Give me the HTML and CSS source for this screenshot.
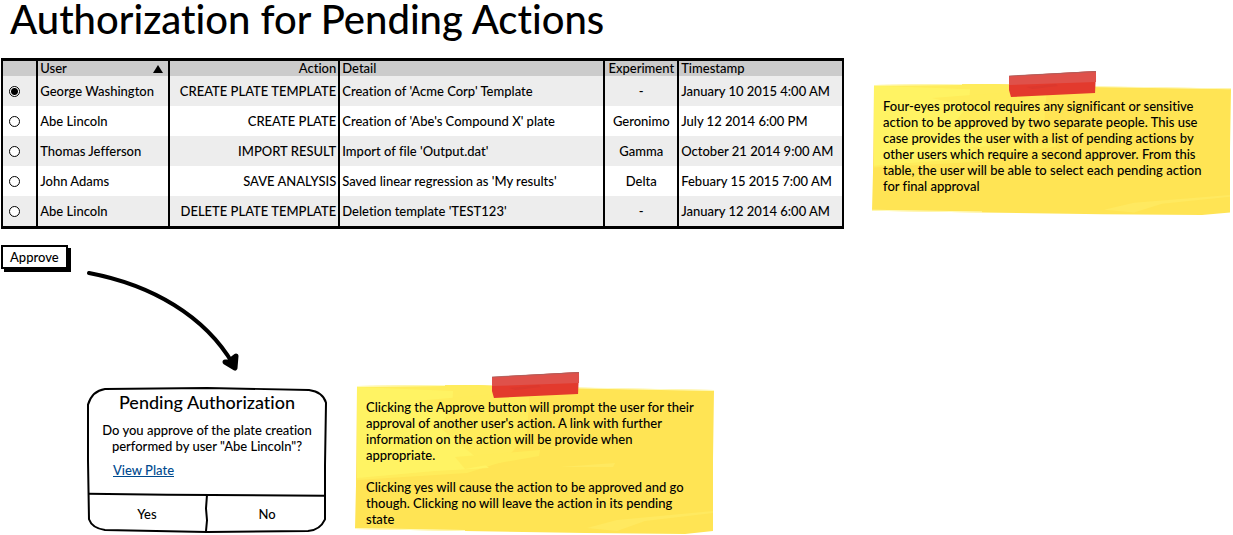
FILE: index.html
```html
<!DOCTYPE html>
<html lang="en">
<head>
<meta charset="utf-8">
<meta name="viewport" content="width=device-width, initial-scale=1">
<title>Authorization for Pending Actions</title>
<link rel="stylesheet" href="styles.css">
</head>
<body>
<svg class="symbols" aria-hidden="true">
  <symbol id="paper" viewBox="0 0 360 150" preserveAspectRatio="none">
    <path fill="#ffe454" d="M2 1L120 0L240 3L359 5L358 74L358 146L330 149L230 148L110 146L0 144L1 100Z"/>
    <path fill="#ffec5b" d="M2 1L120 0L175 3L172 48L150 76L112 88L2 95Z"/>
    <path fill="#fff766" d="M2 2L98 6L97 22L84 42L106 60L134 83L80 86L2 93Z" opacity=".7"/>
    <path fill="#ffec5a" d="M60 16L130 10L210 5L210 9L140 15L90 24ZM100 72L185 65L184 71L110 84Z"/>
    <path fill="#ffe960" d="M232 143L262 135L358 126L358 128L290 136L262 146ZM205 82L260 78L258 82Z"/>
    <path fill="#fffbc0" d="M2 1L90 0L90 1L2 2ZM200 2L359 5L359 6L200 3ZM0 143L110 145L110 146L0 144Z"/>
  </symbol>
  <symbol id="tape" viewBox="0 0 90 26" preserveAspectRatio="none">
    <path fill="#e33a2d" d="M0 5L89 0L88 22L2 26L0 19Z"/>
    <path fill="#df514a" d="M0 5L89 0L89 11L0 14Z"/>
    <path fill="none" stroke="#9b6662" stroke-width=".7" d="M0 5L89 .5"/>
    <path fill="#dc382d" d="M18 16L48 13L50 15L24 18Z"/>
  </symbol>
</svg>

<h1 class="title">Authorization for Pending Actions</h1>

<main>
  <section class="overview">
    <form class="pending" id="pending">
      <table class="actions">
        <colgroup><col class="c-pick"><col class="c-user"><col class="c-action"><col class="c-detail"><col class="c-exp"><col class="c-time"></colgroup>
        <thead>
          <tr>
            <th scope="col" aria-label="Select"></th>
            <th scope="col" aria-sort="ascending"><div class="sorted">User<svg class="sort" viewBox="0 0 10 8" aria-hidden="true"><path d="M5 0L10 8H0Z"/></svg></div></th>
            <th scope="col" class="right">Action</th>
            <th scope="col">Detail</th>
            <th scope="col" class="center">Experiment</th>
            <th scope="col">Timestamp</th>
          </tr>
        </thead>
        <tbody>
          <tr>
            <td class="pick"><input type="radio" name="action" id="a1" checked></td>
            <td><label for="a1">George Washington</label></td>
            <td class="right">CREATE PLATE TEMPLATE</td>
            <td>Creation of 'Acme Corp' Template</td>
            <td class="center">-</td>
            <td>January 10 2015 4:00 AM</td>
          </tr>
          <tr>
            <td class="pick"><input type="radio" name="action" id="a2"></td>
            <td><label for="a2">Abe Lincoln</label></td>
            <td class="right">CREATE PLATE</td>
            <td>Creation of 'Abe's Compound X' plate</td>
            <td class="center">Geronimo</td>
            <td>July 12 2014 6:00 PM</td>
          </tr>
          <tr>
            <td class="pick"><input type="radio" name="action" id="a3"></td>
            <td><label for="a3">Thomas Jefferson</label></td>
            <td class="right">IMPORT RESULT</td>
            <td>Import of file 'Output.dat'</td>
            <td class="center">Gamma</td>
            <td>October 21 2014 9:00 AM</td>
          </tr>
          <tr>
            <td class="pick"><input type="radio" name="action" id="a4"></td>
            <td><label for="a4">John Adams</label></td>
            <td class="right">SAVE ANALYSIS</td>
            <td>Saved linear regression as 'My results'</td>
            <td class="center">Delta</td>
            <td>Febuary 15 2015 7:00 AM</td>
          </tr>
          <tr>
            <td class="pick"><input type="radio" name="action" id="a5"></td>
            <td><label for="a5">Abe Lincoln</label></td>
            <td class="right">DELETE PLATE TEMPLATE</td>
            <td>Deletion template 'TEST123'</td>
            <td class="center">-</td>
            <td>January 12 2014 6:00 AM</td>
          </tr>
        </tbody>
      </table>
      <button class="approve" type="button">Approve</button>
    </form>

    <aside class="note">
      <svg class="paper" aria-hidden="true"><use href="#paper"/></svg>
      <svg class="tape" aria-hidden="true"><use href="#tape"/></svg>
      <p>Four-eyes protocol requires any significant or sensitive action to be approved by two separate people. This use case provides the user with a list of pending actions by other users which require a second approver. From this table, the user will be able to select each pending action for final approval</p>
    </aside>
  </section>

  <section class="confirm">
    <svg class="arrow" viewBox="0 0 152 100" aria-hidden="true">
      <path class="curve" d="M2 2C65 14 118 45 146 93"/>
      <path class="head" d="M138 91L148 97L149 85L145 88L144 91Z"/>
    </svg>
    <div class="dialog" role="dialog" aria-labelledby="dialog-title">
      <svg class="frame" viewBox="0 0 240 149" preserveAspectRatio="none" aria-hidden="true">
        <path d="M18 2L120 1L222 3Q236 5 239 16L238 80L238 135Q233 146 221 147L120 148L18 146Q5 144 2 135L1 75L1 18Q5 4 18 2Z"/>
        <path d="M1 109L80 110L238 111M120 110L119 124L120 136L119 147"/>
      </svg>
      <div class="dialog-body">
        <h2 class="dialog-title" id="dialog-title">Pending Authorization</h2>
        <p class="question">Do you approve of the plate creation performed by user "Abe Lincoln"?</p>
        <a class="view" href="#pending">View Plate</a>
      </div>
      <div class="choices">
        <button type="button">Yes</button>
        <button type="button">No</button>
      </div>
    </div>
    <aside class="note">
      <svg class="paper" aria-hidden="true"><use href="#paper"/></svg>
      <svg class="tape" aria-hidden="true"><use href="#tape"/></svg>
      <p>Clicking the Approve button will prompt the user for their approval of another user's action. A link with further information on the action will be provide when appropriate.</p>
      <p>Clicking yes will cause the action to be approved and go though. Clicking no will leave the action in its pending state</p>
    </aside>
  </section>
</main>
</body>
</html>
```
FILE: styles.css
```css
* {
  box-sizing: border-box;
}

body {
  margin: 0;
  background: #fff;
  color: #000;
  font: 500 13px/16px Lato, "Open Sans", sans-serif;
  font-variant-ligatures: none;
}

h1, h2, p {
  margin: 0;
}

button {
  padding: 0;
  border: 0;
  background: none;
  color: inherit;
  font: inherit;
  cursor: pointer;
}

.symbols {
  position: absolute;
  width: 0;
  height: 0;
}

.title {
  padding: 0 10px;
  font-size: 40px;
  font-weight: 500;
  line-height: 38px;
}

.overview {
  display: grid;
  grid-template-columns: 843fr 360fr;
  gap: 28px;
  align-items: start;
  padding: 20px 1px 0 1px;
}

.actions {
  width: 100%;
  table-layout: fixed;
  border-collapse: separate;
  border-spacing: 0;
  border: 2px solid #000;
  border-width: 3px 2px;
}

.c-pick { width: 4.2%; }
.c-user { width: 15.7%; }
.c-action { width: 20.3%; }
.c-detail { width: 31.6%; }
.c-exp { width: 8.8%; }
.c-time { width: 19.4%; }

.actions th,
.actions td {
  padding: 0 2px;
  border-right: 2px solid #000;
  text-align: left;
  white-space: nowrap;
}

.actions th:last-child,
.actions td:last-child {
  border-right: 0;
}

.actions th {
  height: 15px;
  background: #cbcbcb;
  font-weight: 500;
  line-height: 15px;
}

.actions td {
  height: 30px;
}

.actions tbody tr:nth-child(odd) {
  background: #ededed;
}

.actions .right { text-align: right; }
.actions .center { text-align: center; }
.actions .pick { padding-left: 6px; }

.sorted {
  display: flex;
  align-items: center;
  justify-content: space-between;
  padding-right: 3px;
}

.sort {
  width: 10px;
  height: 8px;
}

input[type="radio"] {
  display: block;
  width: 11px;
  height: 11px;
  margin: 0;
  appearance: none;
  border: 1px solid #000;
  border-radius: 50%;
  background: #fff;
}

input[type="radio"]:checked {
  background: radial-gradient(circle, #000 3px, #fff 4px);
}

.approve {
  display: block;
  margin-top: 16px;
  padding: 2px 7px;
  border: 2px solid #000;
  background: #fff;
  box-shadow: 3px 3px 0 #000;
}

.note {
  position: relative;
  padding: 14px 15px 0 11px;
}

.overview .note {
  min-height: 132px;
  margin-top: 26px;
}

.note p {
  position: relative;
}

.note p + p {
  margin-top: 16px;
}

.paper {
  position: absolute;
  inset: 0;
  width: 100%;
  height: 100%;
}

.tape {
  position: absolute;
  top: -13px;
  left: 38%;
  width: 88px;
  height: 26px;
}

.confirm {
  display: grid;
  grid-template-columns: 240px 360px;
  column-gap: 28px;
  align-items: start;
  padding: 2px 0 0 87px;
}

.arrow {
  grid-column: 1 / -1;
  width: 152px;
  height: 100px;
  margin-bottom: 14px;
}

.curve {
  fill: none;
  stroke: #000;
  stroke-width: 4;
  stroke-linecap: round;
}

.head {
  stroke: #000;
  stroke-width: 5;
  stroke-linejoin: round;
}

.dialog {
  position: relative;
  margin-top: 2px;
}

.frame {
  position: absolute;
  inset: 0;
  width: 100%;
  height: 100%;
  fill: none;
  stroke: #000;
  stroke-width: 2;
  pointer-events: none;
}

.dialog-body {
  min-height: 108px;
  padding: 5px 10px 0;
  text-align: center;
}

.dialog-title {
  margin-bottom: 10px;
  font-size: 18px;
  font-weight: 500;
  line-height: 20px;
}

.view {
  display: block;
  width: max-content;
  margin: 8px 0 0 16px;
  color: #004a8f;
}

.choices {
  display: grid;
  grid-template-columns: 1fr 1fr;
}

.choices button {
  height: 38px;
}

.confirm .note {
  min-height: 150px;
}
```
